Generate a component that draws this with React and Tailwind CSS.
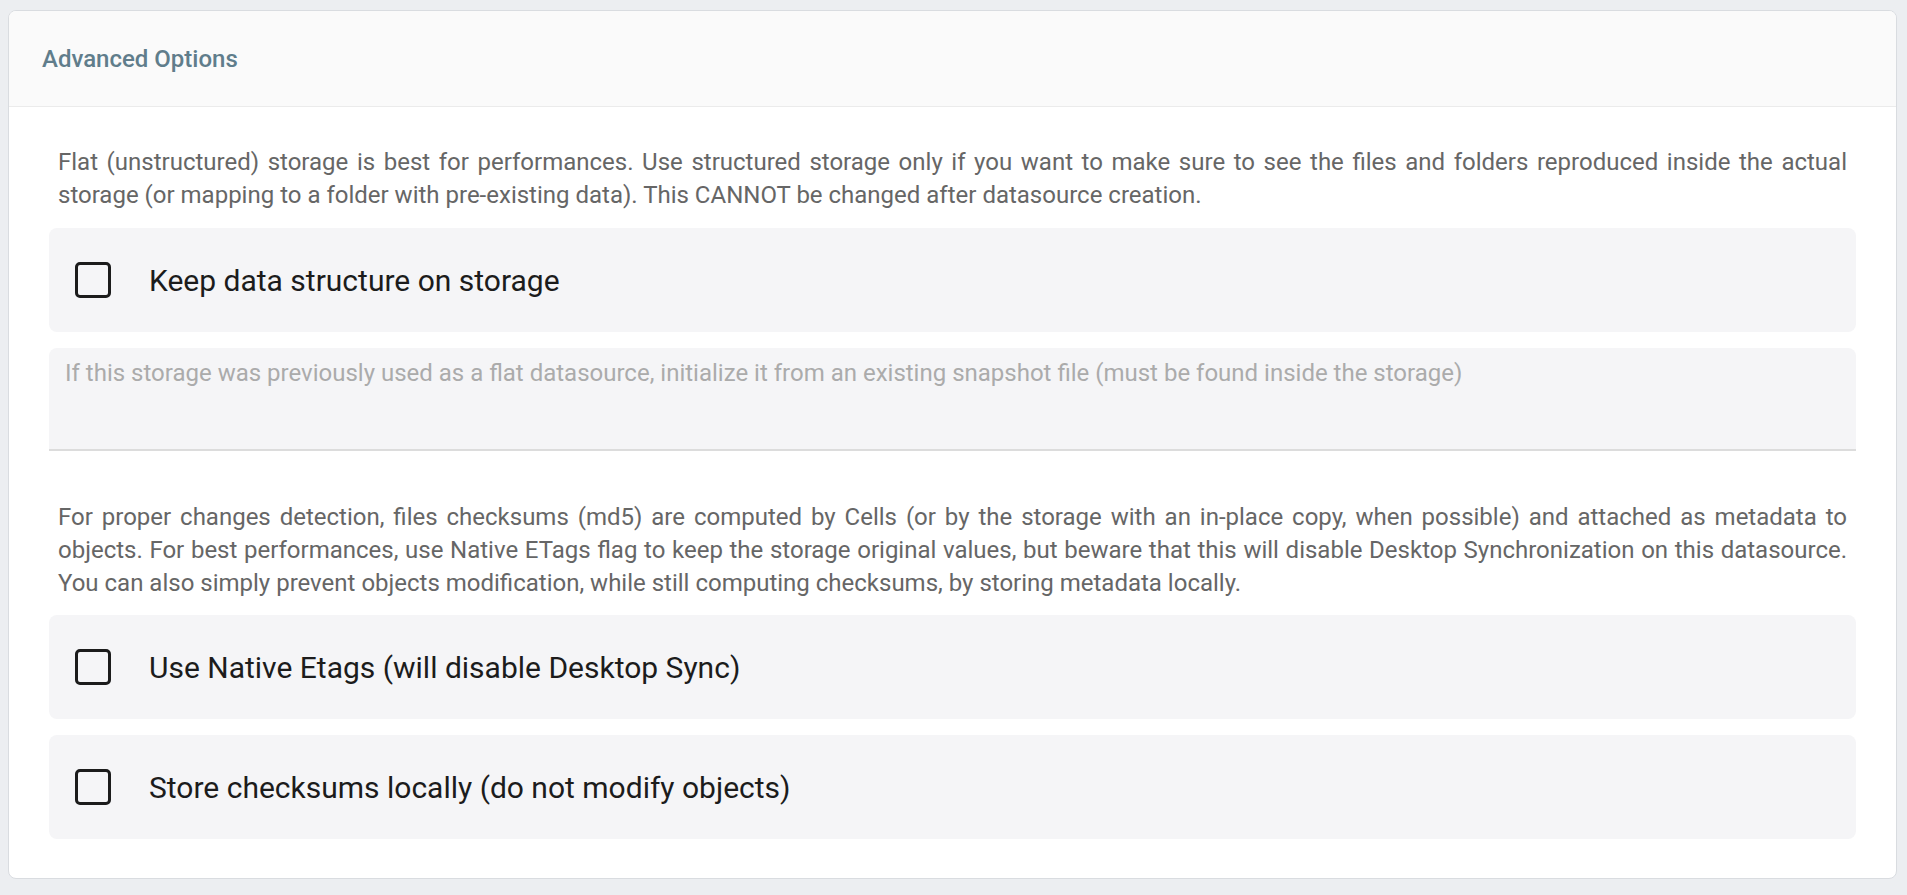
const font = { fontFamily: "Roboto, 'Liberation Sans', sans-serif" };

const CheckRow = ({ label }) => (
  <label className="flex items-center h-[104px] rounded-lg bg-[#f5f5f7] pl-[26px] cursor-pointer">
    <span className="w-[36px] h-[36px] shrink-0 rounded-[5px] border-[3.5px] border-[#1c1c1c]" />
    <span className="ml-[38px] text-[30px] text-[#1c1c1c]">{label}</span>
  </label>
);

export default function App() {
  return (
    <div className="min-h-screen bg-[#eceef1] pt-[10px] pl-[8px] pr-[10px] pb-[16px]" style={font}>
      <div className="rounded-lg border border-[#d9dce0] bg-white overflow-hidden">
        {/* Header */}
        <div className="h-[96px] flex items-center px-[33px] bg-[#fafafa] border-b border-[#ebebeb]">
          <h2 className="text-[24px] font-medium text-[#607d8b]">Advanced Options</h2>
        </div>

        {/* Body */}
        <div className="px-[40px] pt-[39px] pb-[39px]">
          <p className="px-[9px] text-[24px] leading-[33px] text-justify text-[#666666]">
            Flat (unstructured) storage is best for performances. Use structured storage only if you want to make sure to see the files and folders reproduced inside the actual storage (or mapping to a folder with pre-existing data). This CANNOT be changed after datasource creation.
          </p>

          <div className="mt-[16px]">
            <CheckRow label="Keep data structure on storage" />
          </div>

          <div className="mt-[16px] h-[103px] rounded-t-lg bg-[#f5f5f7] border-b-2 border-[#dcdcdc] px-[16px] pt-[10px]">
            <span className="text-[24px] leading-[30px] text-[#ababab]">
              If this storage was previously used as a flat datasource, initialize it from an existing snapshot file (must be found inside the storage)
            </span>
          </div>

          <p className="mt-[50px] px-[9px] text-[24px] leading-[33px] text-justify text-[#666666]">
            For proper changes detection, files checksums (md5) are computed by Cells (or by the storage with an in-place copy, when possible) and attached as metadata to objects. For best performances, use Native ETags flag to keep the storage original values, but beware that this will disable Desktop Synchronization on this datasource. You can also simply prevent objects modification, while still computing checksums, by storing metadata locally.
          </p>

          <div className="mt-[15px] flex flex-col gap-[16px]">
            <CheckRow label="Use Native Etags (will disable Desktop Sync)" />
            <CheckRow label="Store checksums locally (do not modify objects)" />
          </div>
        </div>
      </div>
    </div>
  );
}
